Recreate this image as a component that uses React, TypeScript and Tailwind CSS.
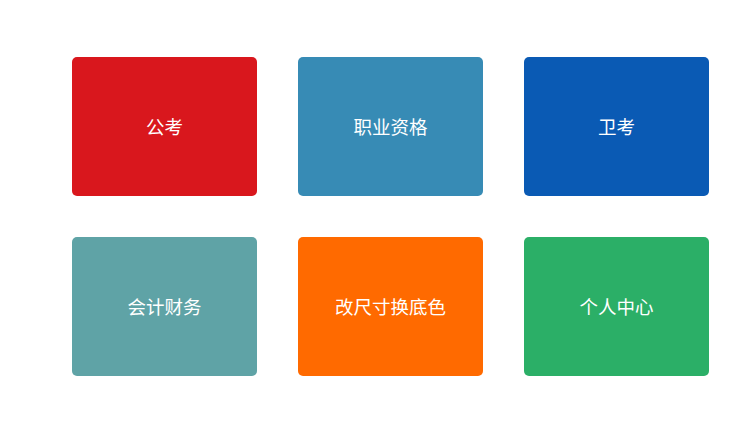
import React from 'react';

const tiles = [
  { label: '公考', bg: 'bg-[#d9171d]' },
  { label: '职业资格', bg: 'bg-[#378bb5]' },
  { label: '卫考', bg: 'bg-[#0a5ab4]' },
  { label: '会计财务', bg: 'bg-[#5fa3a6]' },
  { label: '改尺寸换底色', bg: 'bg-[#ff6a00]' },
  { label: '个人中心', bg: 'bg-[#2baf67]' },
];

export default function App() {
  return (
    <div
      className="w-[750px] h-[422px] bg-white pl-[72px] pt-[57px]"
      style={{ fontFamily: '"Noto Sans CJK SC", "Noto Sans", sans-serif' }}
    >
      <div className="grid grid-cols-[185px_185px_185px] auto-rows-[139px] gap-[41px]">
        {tiles.map((t) => (
          <button
            key={t.label}
            className={`${t.bg} rounded-[5px] flex items-center justify-center text-white text-[18.5px] font-normal`}
          >
            {t.label}
          </button>
        ))}
      </div>
    </div>
  );
}
